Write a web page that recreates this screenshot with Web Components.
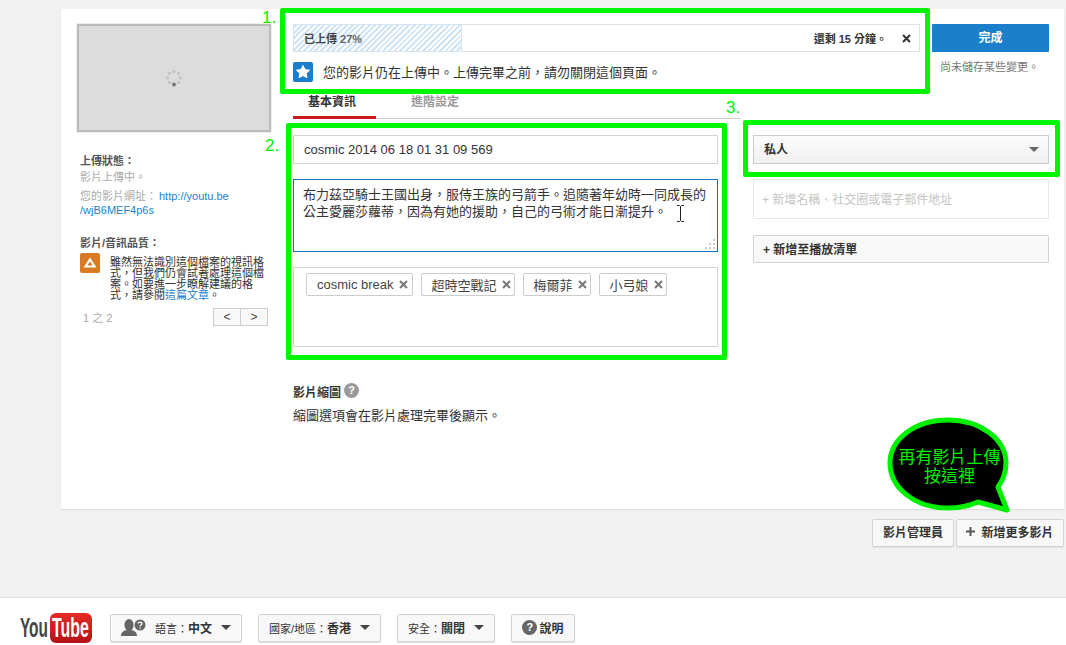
<!DOCTYPE html>
<html lang="zh-Hant">
<head>
<meta charset="utf-8">
<title>上傳</title>
<style>
  html, body { margin: 0; height: 645px; overflow: hidden; }
  body {
    background: #f1f1f1;
    color: #333;
    font: 13px "Liberation Sans", "Noto Sans CJK TC", sans-serif;
  }
</style>
</head>
<body>
<upload-page>
  <upload-sidebar slot="side"></upload-sidebar>
  <upload-progress slot="progress" percent="27" remaining="還剩 15 分鐘。"></upload-progress>
  <publish-actions slot="actions"></publish-actions>
  <upload-tabs slot="tabs"></upload-tabs>
  <video-form slot="form">
    <tag-chip style="padding-right:4px">cosmic break</tag-chip>
    <tag-chip>超時空戰記</tag-chip>
    <tag-chip>梅爾菲</tag-chip>
    <tag-chip>小弓娘</tag-chip>
  </video-form>
  <privacy-panel slot="privacy"></privacy-panel>
</upload-page>
<site-footer></site-footer>

<script>
const FONT = '"Liberation Sans", "Noto Sans CJK TC", sans-serif';

class UploadPage extends HTMLElement {
  constructor() {
    super();
    this.attachShadow({ mode: 'open' });
    this.shadowRoot.innerHTML = `
      <style>
        :host { display: block; position: relative; height: 597px; padding: 9px 2px 0 61px; box-sizing: border-box; }
        .card { height: 500px; background: #fff; box-sizing: border-box; padding: 15px 15px 0 16px;
                display: grid; grid-template-columns: 194px 756px; column-gap: 22px; box-shadow: 0 1px 1px #ddd; }
        .top { display: flex; gap: 12px; height: 58px; }
        .form { display: flex; gap: 35px; margin-top: 16px; }
        .tabs { margin-top: 9px; }
        .bottom { display: flex; justify-content: flex-end; gap: 2px; margin-top: 10px; }
        .bottom flat-button { padding-bottom: 3px; }
        .plus { flex: none; }
      </style>
      <div class="card">
        <div><slot name="side"></slot></div>
        <div>
          <div class="top"><slot name="progress"></slot><slot name="actions"></slot></div>
          <div class="tabs"><slot name="tabs"></slot></div>
          <div class="form"><slot name="form"></slot><slot name="privacy"></slot></div>
        </div>
      </div>
      <div class="bottom">
        <flat-button style="width:82px"><span>影片管理員</span></flat-button>
        <flat-button style="width:108px">
          <svg class="plus" width="9" height="9" viewBox="0 0 9 9"><path d="M4.5 0 V9 M0 4.5 H9" stroke="#555" stroke-width="2"/></svg>
          <span>新增更多影片</span>
        </flat-button>
      </div>
      <green-box style="left:280px;top:8px;width:650px;height:86px"></green-box>
      <green-box style="left:286px;top:123px;width:441px;height:237px"></green-box>
      <green-box style="left:743px;top:120px;width:317px;height:57px"></green-box>
      <green-label style="left:262px;top:8px">1.</green-label>
      <green-label style="left:265px;top:136px">2.</green-label>
      <green-label style="left:726px;top:98px">3.</green-label>
      <speech-bubble></speech-bubble>
    `;
  }
}
customElements.define('upload-page', UploadPage);

class GreenBox extends HTMLElement {
  constructor() {
    super();
    this.attachShadow({ mode: 'open' });
    this.shadowRoot.innerHTML = `
      <style>
        :host { display: block; position: absolute; box-sizing: border-box; border: 5px solid #00f700; border-radius: 2px; pointer-events: none; }
      </style>
    `;
  }
}
customElements.define('green-box', GreenBox);

class GreenLabel extends HTMLElement {
  constructor() {
    super();
    this.attachShadow({ mode: 'open' });
    this.shadowRoot.innerHTML = `
      <style>
        :host { display: block; position: absolute; color: #00f000; font: 17px/20px ${FONT}; }
      </style>
      <slot></slot>
    `;
  }
}
customElements.define('green-label', GreenLabel);

class SpeechBubble extends HTMLElement {
  constructor() {
    super();
    this.attachShadow({ mode: 'open' });
    this.shadowRoot.innerHTML = `
      <style>
        :host { display: block; position: absolute; left: 885px; top: 415px; width: 128px; height: 100px; }
        svg { position: absolute; left: 0; top: 0; }
        .txt { position: absolute; left: 5px; right: 4px; top: 33px; text-align: center; color: #00f000;
               font: 17px/19px ${FONT}; }
      </style>
      <svg width="128" height="100" viewBox="0 0 128 100">
        <path d="M63 5 C95 5 121 24 121 48 C121 57 118 65 113 72 L122 95 L93 87 C84 91 74 93 63 93 C30 93 5 73 5 48 C5 24 30 5 63 5 Z"
              fill="#000" stroke="#00f000" stroke-width="5" stroke-linejoin="round"/>
      </svg>
      <div class="txt">再有影片上傳<br>按這裡</div>
    `;
  }
}
customElements.define('speech-bubble', SpeechBubble);

class UploadSidebar extends HTMLElement {
  constructor() {
    super();
    this.attachShadow({ mode: 'open' });
    this.shadowRoot.innerHTML = `
      <style>
        :host { display: block; font-size: 11px; color: #aaa; }
        a { color: #1b7fcc; text-decoration: none; }
        h4 { margin: 0; font-size: 11px; line-height: 14px; color: #555; }
        .thumb { height: 108px; box-sizing: border-box; background: #dcdcdc; border: 2px solid #bbb;
                 outline: 1px solid #eee; display: flex; align-items: center; justify-content: center; }
        .info { padding-left: 3px; }
        .status { margin-top: 22px; }
        .line { line-height: 14px; margin-top: 2px; }
        .url { margin-top: 5px; line-height: 14px; }
        .url a:first-of-type { margin-left: 2px; }
        .quality { margin-top: 19px; }
        .warn { display: flex; gap: 10px; margin-top: 3px; }
        .warn-text { width: 154px; color: #333; line-height: 11px; padding-top: 4px; }
        .pager { display: flex; justify-content: space-between; align-items: center; margin-top: 7px; padding-left: 6px; width: 185px; }
        .btns { display: flex; }
        .btns span { width: 26px; height: 16px; border: 1px solid #ccc; background: #f8f8f8; color: #444;
                     display: flex; align-items: center; justify-content: center; font-size: 12px; }
        .btns span + span { border-left: 0; }
      </style>
      <div class="thumb">
        <svg width="18" height="18" viewBox="0 0 18 18">
          <g fill="#c4c4c4">
            <circle cx="9" cy="2.5" r="1.7"/><circle cx="13.6" cy="4.4" r="1.7"/><circle cx="15.5" cy="9" r="1.7"/>
            <circle cx="13.6" cy="13.6" r="1.7"/><circle cx="4.4" cy="13.6" r="1.7"/><circle cx="2.5" cy="9" r="1.7"/>
            <circle cx="4.4" cy="4.4" r="1.7"/>
          </g>
          <circle cx="9" cy="15.5" r="1.9" fill="#777"/>
        </svg>
      </div>
      <div class="info">
        <h4 class="status">上傳狀態&#xFF1A;</h4>
        <div class="line">影片上傳中。</div>
        <div class="url">您的影片網址&#xFF1A;<a>http://youtu.be</a><br><a>/wjB6MEF4p6s</a></div>
        <h4 class="quality">影片/音訊品質&#xFF1A;</h4>
        <div class="warn">
          <svg width="20" height="20" viewBox="0 0 20 20" style="flex:none">
            <rect width="20" height="20" rx="2" fill="#d97b25"/>
            <path d="M10 4.5 L16.5 14.5 H3.5 Z M10 8.5 L7.3 12.6 H12.7 Z" fill="#fff" fill-rule="evenodd"/>
          </svg>
          <div class="warn-text">雖然無法識別這個檔案的視訊格式&#xFF0C;但我們仍會試著處理這個檔案。如要進一步瞭解建議的格式&#xFF0C;請參閱<a>這篇文章</a>。</div>
        </div>
      </div>
      <div class="pager">
        <span>1 之 2</span>
        <div class="btns"><span>&lt;</span><span>&gt;</span></div>
      </div>
    `;
  }
}
customElements.define('upload-sidebar', UploadSidebar);

class UploadProgress extends HTMLElement {
  constructor() {
    super();
    this.attachShadow({ mode: 'open' });
    const percent = this.getAttribute('percent');
    const remaining = this.getAttribute('remaining');
    this.shadowRoot.innerHTML = `
      <style>
        :host { display: block; width: 627px; }
        .bar { position: relative; height: 28px; box-sizing: border-box; border: 1px solid #e2e2e2; display: flex;
               align-items: center; justify-content: space-between; padding: 0 8px 0 10px; font-size: 11px; font-weight: bold; }
        .fill { position: absolute; left: -1px; top: -1px; bottom: -1px; width: 169px; border: 1px solid #d3e5f5; box-sizing: border-box;
                background: repeating-linear-gradient(-45deg, #fff 0 2px, #cfe4f7 2px 4px); }
        .pct { position: relative; color: #444; }
        .pct i { font-style: normal; color: #666; }
        .left { position: relative; display: flex; align-items: center; gap: 15px; color: #333; }
        .msg { display: flex; align-items: center; gap: 10px; margin-top: 10px; height: 20px; color: #333; }
        .msg span { position: relative; top: -1px; }
      </style>
      <div class="bar">
        <div class="fill"></div>
        <span class="pct">已上傳 <i>${percent}%</i></span>
        <span class="left"><span>${remaining}</span>
          <svg width="9" height="9" viewBox="0 0 9 9"><path d="M1 1 L8 8 M8 1 L1 8" stroke="#333" stroke-width="2"/></svg>
        </span>
      </div>
      <div class="msg">
        <svg width="20" height="20" viewBox="0 0 20 20">
          <rect width="20" height="20" rx="2" fill="#1c7dcb"/>
          <path d="M10 3.5 L12 7.6 L16.5 8.2 L13.2 11.3 L14 15.7 L10 13.6 L6 15.7 L6.8 11.3 L3.5 8.2 L8 7.6 Z"
                fill="#fff" stroke="#fff" stroke-width="1" stroke-linejoin="round"/>
        </svg>
        <span>您的影片仍在上傳中。上傳完畢之前&#xFF0C;請勿關閉這個頁面。</span>
      </div>
    `;
  }
}
customElements.define('upload-progress', UploadProgress);

class PublishActions extends HTMLElement {
  constructor() {
    super();
    this.attachShadow({ mode: 'open' });
    this.shadowRoot.innerHTML = `
      <style>
        :host { display: block; width: 117px; text-align: center; font-size: 11px; color: #777; }
        .done { height: 28px; background: #1b7fcc; color: #fff; font-weight: bold; font-size: 12px; line-height: 29px; border-radius: 1px; }
        .note { margin-top: 7px; line-height: 16px; padding-right: 2px; }
      </style>
      <div class="done">完成</div>
      <div class="note">尚未儲存某些變更。</div>
    `;
  }
}
customElements.define('publish-actions', PublishActions);

class UploadTabs extends HTMLElement {
  constructor() {
    super();
    this.attachShadow({ mode: 'open' });
    this.shadowRoot.innerHTML = `
      <style>
        :host { display: flex; width: 448px; height: 28px; box-sizing: border-box; border-bottom: 1px solid #ccc; font-size: 12px; font-weight: bold; }
        div { height: 28px; box-sizing: border-box; line-height: 23px; }
        .on { width: 83px; padding-left: 15px; color: #333; border-bottom: 3px solid #cc181e; }
        .off { margin-left: 35px; color: #999; }
      </style>
      <div class="on">基本資訊</div>
      <div class="off">進階設定</div>
    `;
  }
}
customElements.define('upload-tabs', UploadTabs);

class VideoForm extends HTMLElement {
  constructor() {
    super();
    this.attachShadow({ mode: 'open' });
    this.shadowRoot.innerHTML = `
      <style>
        :host { display: block; width: 425px; color: #333; }
        .box { box-sizing: border-box; border: 1px solid #d3d3d3; }
        .title { height: 29px; line-height: 27px; padding-left: 10px; }
        .desc { position: relative; height: 73px; margin-top: 15px; padding: 6px 9px; border-color: #1c72b8; line-height: 17px; color: #333; }
        .beam { position: absolute; left: 382px; top: 25px; }
        .grip { position: absolute; right: 1px; bottom: 1px; }
        .tags { height: 80px; margin-top: 15px; padding: 5px 12px; display: flex; gap: 8px; align-items: flex-start; }
        .thumbs { margin-top: 36px; }
        h4 { margin: 0; font-size: 12px; line-height: 16px; color: #333; display: flex; align-items: flex-end; gap: 3px; height: 18px; }
        .q { width: 15px; height: 15px; border-radius: 50%; background: #999; color: #fff; font-size: 11px; line-height: 15px;
             text-align: center; margin-bottom: 3px; }
        p { margin: 6px 0 0; line-height: 18px; }
      </style>
      <div class="box title">cosmic 2014 06 18 01 31 09 569</div>
      <div class="box desc">布力茲亞騎士王國出身&#xFF0C;服侍王族的弓箭手。追隨著年幼時一同成長的公主愛麗莎蘿蒂&#xFF0C;因為有她的援助&#xFF0C;自己的弓術才能日漸提升。
        <svg class="beam" width="9" height="17" viewBox="0 0 9 17"><path d="M1 .5 H3.5 L4.5 1.5 L5.5 .5 H8 M4.5 1.5 V15.5 M1 16.5 H3.5 L4.5 15.5 L5.5 16.5 H8" fill="none" stroke="#222"/></svg>
        <svg class="grip" width="12" height="12" viewBox="0 0 12 12" fill="#ccc">
          <rect x="9" y="1" width="2" height="2"/><rect x="5" y="5" width="2" height="2"/><rect x="9" y="5" width="2" height="2"/>
          <rect x="1" y="9" width="2" height="2"/><rect x="5" y="9" width="2" height="2"/><rect x="9" y="9" width="2" height="2"/>
        </svg>
      </div>
      <div class="box tags"><slot></slot></div>
      <div class="thumbs">
        <h4>影片縮圖<span class="q">?</span></h4>
        <p>縮圖選項會在影片處理完畢後顯示。</p>
      </div>
    `;
  }
}
customElements.define('video-form', VideoForm);

class TagChip extends HTMLElement {
  constructor() {
    super();
    this.attachShadow({ mode: 'open' });
    this.shadowRoot.innerHTML = `
      <style>
        :host { display: inline-flex; align-items: center; height: 23px; box-sizing: border-box; padding: 0 3px 0 10px; gap: 5px;
                border: 1px solid #ccc; border-radius: 2px; color: #444; }
        svg { flex: none; }
      </style>
      <slot></slot>
      <svg width="9" height="9" viewBox="0 0 9 9"><path d="M1 1 L8 8 M8 1 L1 8" stroke="#777" stroke-width="2"/></svg>
    `;
  }
}
customElements.define('tag-chip', TagChip);

class PrivacyPanel extends HTMLElement {
  constructor() {
    super();
    this.attachShadow({ mode: 'open' });
    this.shadowRoot.innerHTML = `
      <style>
        :host { display: block; width: 296px; font-size: 12px; }
        .select { height: 29px; box-sizing: border-box; border: 1px solid #ccc; background: linear-gradient(#fcfcfc, #f0f0f0);
                  display: flex; align-items: center; justify-content: space-between; padding: 0 9px 2px 10px; font-weight: bold; color: #333; }
        .arrow { width: 0; height: 0; border: 5px solid transparent; border-top: 5px solid #666; border-bottom: 0; margin-top: 2px; }
        .share { height: 40px; margin-top: 15px; box-sizing: border-box; border: 1px solid #e6e6e6; line-height: 40px; padding-left: 8px; color: #c4c4c4; }
        .add { height: 28px; margin-top: 16px; box-sizing: border-box; border: 1px solid #d3d3d3; border-radius: 1px; background: #f8f8f8;
               line-height: 28px; padding-left: 9px; font-weight: bold; color: #333; }
      </style>
      <div class="select">私人<span class="arrow"></span></div>
      <div class="share">+ 新增名稱、社交圈或電子郵件地址</div>
      <div class="add">+ 新增至播放清單</div>
    `;
  }
}
customElements.define('privacy-panel', PrivacyPanel);

class FlatButton extends HTMLElement {
  constructor() {
    super();
    this.attachShadow({ mode: 'open' });
    this.shadowRoot.innerHTML = `
      <style>
        :host { display: inline-flex; align-items: center; justify-content: center; height: 28px; box-sizing: border-box; padding: 0 0 1px; gap: 6px;
                border: 1px solid #d3d3d3; border-radius: 2px; background: #f8f8f8; box-shadow: 0 1px 1px #ddd;
                color: #333; font: bold 12px ${FONT}; white-space: nowrap; }
      </style>
      <slot></slot>
    `;
  }
}
customElements.define('flat-button', FlatButton);

class SiteFooter extends HTMLElement {
  constructor() {
    super();
    this.attachShadow({ mode: 'open' });
    this.shadowRoot.innerHTML = `
      <style>
        :host { display: flex; align-items: flex-start; height: 48px; box-sizing: border-box; background: #fff; border-top: 1px solid #e2e2e2;
                padding: 16px 0 0 20px; color: #333; }
        .logo { margin: -3px 18px 0 0; flex: none; display: block; }
        flat-button { margin-right: 16px; font-size: 11px; font-weight: normal; }
        b { font-size: 12px; }
        .arrow { width: 0; height: 0; border: 5px solid transparent; border-top: 5px solid #444; border-bottom: 0; margin-left: 3px; }
        .q { width: 15px; height: 15px; border-radius: 50%; background: #666; color: #fff; font-weight: bold; font-size: 11px; line-height: 15px; text-align: center; }
      </style>
      <svg class="logo" width="72" height="34" viewBox="0 -2 72 34">
        <defs><linearGradient id="red" x1="0" y1="0" x2="0" y2="1"><stop offset="0" stop-color="#e62b27"/><stop offset="1" stop-color="#b21217"/></linearGradient></defs>
        <rect x="30" width="42" height="30" rx="6" fill="url(#red)"/>
        <text transform="translate(0 24) scale(.55 1)" font-family="Liberation Sans" font-weight="bold" font-size="28" fill="#444">You</text>
        <text transform="translate(32 24) scale(.57 1)" font-family="Liberation Sans" font-weight="bold" font-size="28" fill="#fff">Tube</text>
      </svg>
      <flat-button style="width:132px">
        <svg width="25" height="17" viewBox="0 0 25 17" style="margin-right:3px">
          <ellipse cx="8" cy="6" rx="4.6" ry="6" fill="#666"/>
          <path d="M0 17 C0 12 4 11 8 11 C12 11 16 12 16 17 Z" fill="#666"/>
          <circle cx="19" cy="6" r="5.5" fill="#666"/>
          <path d="M17 4.6 C17 2.6 21 2.6 21 4.6 C21 6 19 6 19 7.6 M19 8.6 V9.8" fill="none" stroke="#fff" stroke-width="1.3"/>
        </svg>
        <span>語言&#xFF1A;<b>中文</b></span><span class="arrow"></span>
      </flat-button>
      <flat-button style="width:123px"><span>國家/地區&#xFF1A;<b>香港</b></span><span class="arrow"></span></flat-button>
      <flat-button style="width:98px"><span>安全&#xFF1A;<b>關閉</b></span><span class="arrow"></span></flat-button>
      <flat-button style="width:64px;gap:2px"><span class="q">?</span><b>說明</b></flat-button>
    `;
  }
}
customElements.define('site-footer', SiteFooter);
</script>
</body>
</html>
